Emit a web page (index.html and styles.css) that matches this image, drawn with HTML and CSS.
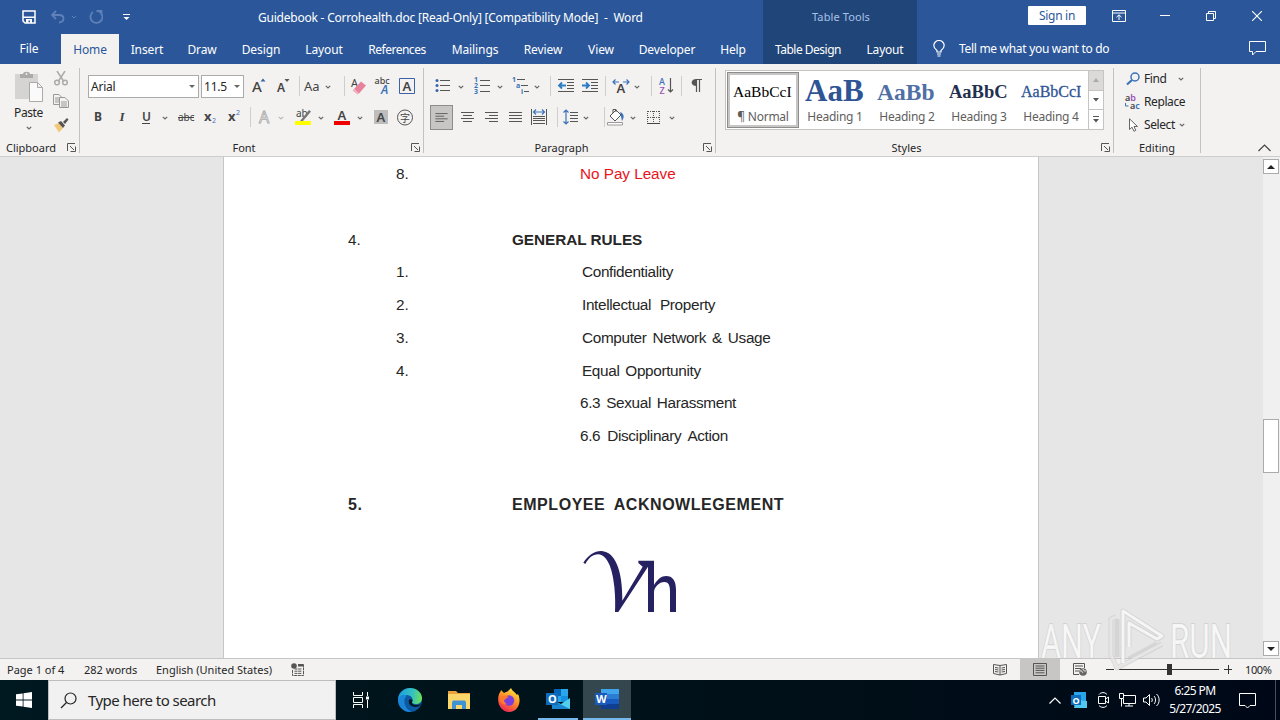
FILE: index.html
```
<!DOCTYPE html>
<html lang="en">
<head>
  <meta charset="UTF-8">
  <title>Guidebook - Corrohealth.doc - Word</title>
  <link rel="stylesheet" href="styles.css">
</head>
<body>
  <svg class="defs" width="0" height="0">
    <symbol id="chev" viewBox="0 0 6 4"><path d="M.8.8L3 3L5.2.8" fill="none" stroke="#666" stroke-width="1.2"/></symbol>
    <symbol id="launch" viewBox="0 0 9 9"><path d="M.5 8V.5H8M3 3L7 7M8.500 3.500V8.500H3.500" fill="none" stroke="#555"/></symbol>
  </svg>
  <div class="desktop">
    <header class="header">
      <div class="header__main">
        <div class="titlebar">
          <div class="quick">
            <svg width="14" height="14" viewBox="0 0 14 14"><path d="M1 1H13V13H3L1 11Z" fill="none" stroke="#fff" stroke-width="1.500"/><path d="M1 6.500H13V8H1ZM4 9H10V13H8V10.500H6.500V13H4Z" fill="#fff"/></svg>
            <svg width="28" height="14" viewBox="0 0 28 14"><path d="M6 1L2 5L6 9M2 5H9C15 5 15 12 9 12.500" fill="none" stroke="#5f80b8" stroke-width="1.800"/><path d="M22 6l2 2 2-2" fill="none" stroke="#5f80b8"/></svg>
            <svg width="14" height="14" viewBox="0 0 14 14"><path d="M10 1.500A6 6 0 1 1 4 2M7.500 1H12.500V5" fill="none" stroke="#5f80b8" stroke-width="1.800"/></svg>
            <svg width="7" height="7" viewBox="0 0 7 7"><path d="M0 .5H7" stroke="#fff"/><path d="M.5 3H6.500L3.500 6Z" fill="#fff"/></svg>
          </div>
          <div class="titlebar__name">Guidebook - Corrohealth.doc [Read-Only] [Compatibility Mode]&nbsp; -&nbsp; Word</div>
        </div>
        <nav class="tabs">
          <span class="tabs__file">File</span>
          <span class="tabs__active">Home</span>
          <span>Insert</span>
          <span>Draw</span>
          <span>Design</span>
          <span>Layout</span>
          <span>References</span>
          <span>Mailings</span>
          <span>Review</span>
          <span>View</span>
          <span>Developer</span>
          <span>Help</span>
        </nav>
      </div>
      <div class="context">
        <div class="context__title">Table Tools</div>
        <div class="context__tabs"><span>Table Design</span><span>Layout</span></div>
      </div>
      <div class="header__right">
        <div class="window">
          <button class="window__signin">Sign in</button>
          <svg width="14" height="12" viewBox="0 0 14 12"><path d="M.5.5H13.500V11.500H.5ZM.5 3H13.500M7 10V5M4.500 7.200L7 4.800L9.500 7.200" fill="none" stroke="#fff"/></svg>
          <svg width="10" height="10" viewBox="0 0 10 10"><path d="M0 4.500H10" stroke="#fff"/></svg>
          <svg width="10" height="10" viewBox="0 0 10 10"><path d="M.5 2.500H7.500V9.500H.5ZM2.500 2.500V.5H9.500V7.500H7.500" fill="none" stroke="#fff"/></svg>
          <svg width="10" height="10" viewBox="0 0 10 10"><path d="M0 0L10 10M10 0L0 10" stroke="#fff" stroke-width="1.100"/></svg>
        </div>
        <div class="tell">
          <svg width="12" height="17" viewBox="0 0 12 17"><path d="M4 12V10.500C2 9 .8 7.500.8 5.500A5.200 5 0 0 1 11.200 5.500C11.200 7.500 10 9 8 10.500V12ZM4 14H8M4.500 16H7.500" fill="none" stroke="#fff" stroke-width="1.200"/></svg>
          <span>Tell me what you want to do</span>
          <svg class="tell__comment" width="17" height="15" viewBox="0 0 17 15"><path d="M.5.5H16.500V10.500H7L3.500 14V10.500H.5Z" fill="none" stroke="#fff"/></svg>
        </div>
      </div>
    </header>

    <section class="ribbon">
      <div class="group group--clipboard">
        <div class="clipboard">
          <div class="clipboard__paste">
            <svg width="30" height="32" viewBox="0 0 30 32"><path d="M1 3H24V28H1Z" fill="#d6d3d3"/><path d="M6 7V3H9C9 0 16 0 16 3H19V7Z" fill="#aaa"/><circle cx="12.500" cy="3" r="1" fill="#eee"/><path d="M15.500 11.500H23.500L28.500 16.500V30.500H15.500ZM23.500 11.500V16.500H28.500" fill="#fafafa" stroke="#aaa"/></svg>
            <span>Paste</span>
            <svg width="6" height="4"><use href="#chev"/></svg>
          </div>
          <div class="clipboard__side">
            <svg width="16" height="16" viewBox="0 0 16 16" fill="none" stroke="#aaa" stroke-width="1.500"><path d="M4 0L10.500 10M12 0L5.500 10"/><circle cx="4" cy="11.500" r="2.300"/><circle cx="12" cy="11.500" r="2.300"/></svg>
            <svg width="16" height="16" viewBox="0 0 16 16" fill="#f3f2f1" stroke="#999"><path d="M.5.5H6L8.500 3V10.500H.5ZM2 4H7M2 6H7M2 8H7"/><path d="M6.500 3.500H12L15.500 7V13.500H6.500ZM8 8H14M8 10H14M8 12H14"/></svg>
            <svg width="16" height="16" viewBox="0 0 16 16"><path d="M1 8L6 6L10 11L6 15.500Z" fill="#f0c878"/><path d="M5 5.500L8 4L12 8.500L10 11ZM10 5L14 1L15.500 2.500L12 7Z" fill="#555"/></svg>
          </div>
        </div>
        <div class="group__label">Clipboard<svg class="group__launch" width="9" height="9"><use href="#launch"/></svg></div>
      </div>

      <div class="group group--font">
        <div class="row row--font1">
          <div class="combo combo--name">Arial<i></i></div>
          <div class="combo combo--size">11.5<i></i></div>
          <svg width="24" height="24" viewBox="0 0 24 24"><text x="4" y="18" class="t16">A</text><path d="M12.500 7.500L15 4.500L17.500 7.500Z" fill="#3b62a8"/></svg>
          <svg width="24" height="24" viewBox="0 0 24 24"><text x="5" y="18" class="t12">A</text><path d="M12.500 5L15 8L17.500 5Z" fill="#555"/></svg>
          <b class="sep"></b>
          <svg width="38" height="24" viewBox="0 0 38 24"><text x="2" y="17" class="t13 plain">Aa</text><use href="#chev" x="23" y="11" width="6" height="4"/></svg>
          <b class="sep"></b>
          <svg width="24" height="24" viewBox="0 0 24 24"><text x="4" y="13" class="t11">A</text><path d="M7 15L14 7.500L19 11.500L12 19.500Z" fill="#e8829c"/><path d="M7 15L12 19.500L10.500 20.500L5.500 16.500Z" fill="#efb0bf"/></svg>
          <svg width="24" height="24" viewBox="0 0 24 24"><text x="3.500" y="10" class="t9">abc</text><text x="10" y="20" class="t12 blue ital">A</text></svg>
          <svg width="24" height="24" viewBox="0 0 24 24"><path d="M4.500 4.500H19.500V19.500H4.500Z" fill="none" stroke="#3b62a8"/><text x="7.500" y="17" class="t13">A</text></svg>
        </div>
        <div class="row row--font2">
          <svg width="24" height="24" viewBox="0 0 24 24"><text x="8" y="16" class="t12 bold">B</text></svg>
          <svg width="24" height="24" viewBox="0 0 24 24"><text x="9.500" y="16" class="t13 serif">I</text></svg>
          <svg width="38" height="24" viewBox="0 0 38 24"><text x="8" y="15.500" class="t12">U</text><path d="M8 18.500H16" stroke="#444"/><use href="#chev" x="28" y="11" width="6" height="4"/></svg>
          <svg width="24" height="24" viewBox="0 0 24 24"><text x="4" y="16" class="t10">abc</text><path d="M4 12.500H20" stroke="#444"/></svg>
          <svg width="24" height="24" viewBox="0 0 24 24"><text x="6" y="16" class="t13 bold">x</text><text x="14" y="18" class="t7 blue">2</text></svg>
          <svg width="24" height="24" viewBox="0 0 24 24"><text x="6" y="16" class="t13 bold">x</text><text x="14" y="10" class="t7 blue">2</text></svg>
          <b class="sep"></b>
          <svg width="38" height="24" viewBox="0 0 38 24"><text x="6" y="18" class="outline">A</text><use href="#chev" x="25" y="11" width="6" height="4" opacity=".4"/></svg>
          <svg width="38" height="24" viewBox="0 0 38 24"><text x="4" y="12" class="t10">ab</text><path d="M8 16L17 5L19 6.500L11 16Z" fill="#777"/><path d="M3 16H19V20H3Z" fill="#ff0"/><use href="#chev" x="26" y="11" width="6" height="4"/></svg>
          <svg width="38" height="24" viewBox="0 0 38 24"><text x="6.500" y="15" class="t13">A</text><path d="M3 16H19V20H3Z" fill="#e00"/><use href="#chev" x="26" y="11" width="6" height="4"/></svg>
          <svg width="24" height="24" viewBox="0 0 24 24"><path d="M5 5H19V19H5Z" fill="#bdbdbd"/><text x="7.500" y="17" class="t13">A</text></svg>
          <svg width="24" height="24" viewBox="0 0 24 24"><circle cx="12" cy="12.500" r="7.500" fill="none" stroke="#555"/><text x="7" y="16.500" class="cjk">字</text></svg>
        </div>
        <div class="group__label">Font<svg class="group__launch" width="9" height="9"><use href="#launch"/></svg></div>
      </div>

      <div class="group group--para">
        <div class="row row--para1">
          <svg width="38" height="24" viewBox="0 0 38 24"><path d="M10 6.500H20M10 11.500H20M10 16.500H20" stroke="#555"/><g fill="#3b62a8"><circle cx="7" cy="6.500" r="1.500"/><circle cx="7" cy="11.500" r="1.500"/><circle cx="7" cy="16.500" r="1.500"/></g><use href="#chev" x="28" y="11" width="6" height="4"/></svg>
          <svg width="38" height="24" viewBox="0 0 38 24"><path d="M10 6.500H20M10 11.500H20M10 17.500H20" stroke="#555"/><text x="4" y="8" class="t6 blue">1</text><text x="4" y="14" class="t6 blue">2</text><text x="4" y="20" class="t6 blue">3</text><use href="#chev" x="27" y="11" width="6" height="4"/></svg>
          <svg width="38" height="24" viewBox="0 0 38 24"><path d="M8 5.500H16M12 11.500H19M15 17.500H20" stroke="#555"/><text x="3" y="8" class="t6 blue">1</text><text x="7" y="14" class="t6 blue">a</text><text x="12" y="20" class="t6 blue">i</text><use href="#chev" x="25" y="11" width="6" height="4"/></svg>
          <b class="sep"></b>
          <svg width="24" height="24" viewBox="0 0 24 24"><path d="M4 5.500H20M13 8.500H20M13 11.500H20M13 14.500H20M4 17.500H20" stroke="#555"/><path d="M12 11.500H5M8 8.500L5 11.500L8 14.500" fill="none" stroke="#2b7cc4" stroke-width="1.800"/></svg>
          <svg width="24" height="24" viewBox="0 0 24 24"><path d="M4 5.500H20M13 8.500H20M13 11.500H20M13 14.500H20M4 17.500H20" stroke="#555"/><path d="M4 11.500H11M8 8.500L11 11.500L8 14.500" fill="none" stroke="#2b7cc4" stroke-width="1.800"/></svg>
          <b class="sep"></b>
          <svg width="38" height="24" viewBox="0 0 38 24"><text x="7.500" y="18.500" class="t13">A</text><path d="M4 8H10M6.500 5.500L4 8L6.500 10.500M14 8H20M17.500 5.500L20 8L17.500 10.500" fill="none" stroke="#3b72b8" stroke-width="1.200"/><use href="#chev" x="25" y="11" width="6" height="4"/></svg>
          <b class="sep"></b>
          <svg width="24" height="24" viewBox="0 0 24 24"><text x="4" y="11" class="t9 blue">A</text><text x="4.500" y="20" class="t9 purple">Z</text><path d="M15.500 4V18M13 15.500L15.500 18L18 15.500" fill="none" stroke="#555" stroke-width="1.200"/></svg>
          <b class="sep"></b>
          <svg width="24" height="24" viewBox="0 0 24 24"><path d="M11 5.500H17M11.500 5V18M14.500 5V18" stroke="#555" stroke-width="1.200"/><path d="M11.500 5V12C5 12 5 5 11.500 5Z" fill="#555"/></svg>
        </div>
        <div class="row row--para2">
          <svg class="pressed" width="24" height="24" viewBox="0 0 24 24"><path d="M5 7.500H19M5 10.500H15M5 13.500H19M5 16.500H15" stroke="#555"/></svg>
          <svg width="24" height="24" viewBox="0 0 24 24"><path d="M5 7.500H18M7 10.500H16M5 13.500H18M7 16.500H16" stroke="#555"/></svg>
          <svg width="24" height="24" viewBox="0 0 24 24"><path d="M5 7.500H18M9 10.500H18M5 13.500H18M9 16.500H18" stroke="#555"/></svg>
          <svg width="24" height="24" viewBox="0 0 24 24"><path d="M5 7.500H18M5 10.500H18M5 13.500H18M5 16.500H18" stroke="#555"/></svg>
          <svg width="24" height="24" viewBox="0 0 24 24"><path d="M3.500 4V20M18.500 4V20M5 11.500H17M5 13.500H17M5 15.500H17M5 18.500H17" stroke="#555"/><path d="M5 7H17M8 4.500L5.500 7L8 9.500M14 4.500L16.500 7L14 9.500" fill="none" stroke="#3b72b8" stroke-width="1.200"/></svg>
          <b class="sep"></b>
          <svg width="38" height="24" viewBox="0 0 38 24"><path d="M9 7.500H17M9 10.500H17M9 13.500H17M9 16.500H17" stroke="#555"/><path d="M5 5V19M2.500 7.500L5 5L7.500 7.500M2.500 16.500L5 19L7.500 16.500" fill="none" stroke="#3b72b8" stroke-width="1.200"/><use href="#chev" x="22" y="11" width="6" height="4"/></svg>
          <b class="sep"></b>
          <svg width="38" height="24" viewBox="0 0 38 24"><path d="M3 11L9 5L14 10L8 16ZM6 8V4.500H9V7" fill="#fff" stroke="#555"/><path d="M13 7C18 9 17 13 15 16Z" fill="#3b72b8"/><path d="M.5 17.500H15.500V20H.5Z" fill="#fff" stroke="#999"/><use href="#chev" x="23" y="11" width="6" height="4"/></svg>
          <svg width="38" height="24" viewBox="0 0 38 24"><path d="M1.500 6V18M7.500 6V18M13.500 6V18M2 6.500H14M2 12.500H14" fill="none" stroke="#555" stroke-dasharray="1 1"/><path d="M1 18.500H14" stroke="#444"/><use href="#chev" x="23" y="11" width="6" height="4"/></svg>
        </div>
        <div class="group__label">Paragraph<svg class="group__launch" width="9" height="9"><use href="#launch"/></svg></div>
      </div>

      <div class="group group--styles">
        <div class="gallery">
          <div class="style style--on"><span class="style__demo demo--normal">AaBbCcI</span><span class="style__name">¶ Normal</span></div>
          <div class="style"><span class="style__demo demo--h1">AaB</span><span class="style__name">Heading 1</span></div>
          <div class="style"><span class="style__demo demo--h2">AaBb</span><span class="style__name">Heading 2</span></div>
          <div class="style"><span class="style__demo demo--h3">AaBbC</span><span class="style__name">Heading 3</span></div>
          <div class="style"><span class="style__demo demo--h4">AaBbCcI</span><span class="style__name">Heading 4</span></div>
          <div class="gallery__scroll">
            <span><svg width="6" height="4"><path d="M0 4L3 0L6 4Z" fill="#aaa"/></svg></span>
            <span><svg width="6" height="4"><path d="M0 0L3 3.500L6 0Z" fill="#555"/></svg></span>
            <span><svg width="6" height="7"><path d="M0 .5H6" stroke="#555"/><path d="M0 3L3 6.500L6 3Z" fill="#555"/></svg></span>
          </div>
        </div>
        <div class="group__label">Styles<svg class="group__launch" width="9" height="9"><use href="#launch"/></svg></div>
      </div>

      <div class="group group--editing">
        <div class="editing">
          <div><svg width="14" height="14" viewBox="0 0 14 14"><circle cx="9" cy="5" r="4" fill="none" stroke="#3b72b8" stroke-width="1.500"/><path d="M6 8L1 12.500" stroke="#3b72b8" stroke-width="2.200"/></svg><span>Find</span><svg class="editing__find" width="6" height="4"><use href="#chev"/></svg></div>
          <div><svg class="editing__replace" width="17" height="18" viewBox="0 0 17 18"><text x="1" y="8" class="t10">a<tspan class="purple">b</tspan></text><text x="6" y="16" class="t10">a<tspan class="blue">c</tspan></text><path d="M1.500 10V13H4.500" fill="none" stroke="#3b72b8"/></svg><span>Replace</span></div>
          <div><svg width="14" height="14" viewBox="0 0 14 14"><path d="M3.500.8V11.500L6 9.200L8 13.300L9.800 12.300L8 8.500H11.500Z" fill="#fff" stroke="#666"/></svg><span>Select</span><svg width="6" height="4"><use href="#chev"/></svg></div>
        </div>
        <div class="group__label">Editing</div>
      </div>
      <svg class="ribbon__collapse" width="13" height="8" viewBox="0 0 13 8"><path d="M.5 7L6.500 1L12.500 7" fill="none" stroke="#444" stroke-width="1.200"/></svg>
    </section>

    <main class="doc">
      <div class="page">
        <div class="line line--sub"><span>8.</span><span class="red">No Pay Leave</span></div>
        <div class="line"></div>
        <div class="line line--top"><span>4.</span><b>GENERAL RULES</b></div>
        <div class="line line--sub line--in"><span>1.</span><span class="tight">Confidentiality</span></div>
        <div class="line line--sub line--in"><span>2.</span><span class="tight tight--gap">Intellectual Property</span></div>
        <div class="line line--sub line--in"><span>3.</span><span class="tight">Computer Network &amp; Usage</span></div>
        <div class="line line--sub line--in"><span>4.</span><span class="tight">Equal Opportunity</span></div>
        <div class="line line--sub"><span></span><span class="tight">6.3 Sexual Harassment</span></div>
        <div class="line line--sub"><span></span><span class="tight tight--last">6.6 Disciplinary Action</span></div>
        <div class="line line--blank"></div>
        <div class="line line--top line--ack"><b>5.</b><b>EMPLOYEE ACKNOWLEGEMENT</b></div>
        <svg class="page__logo" width="140" height="100" viewBox="0 0 420 300"><path fill="#262262" d="M70 98C85 75 105 62 125 63C165 66 188 120 187 212L248 110L235 99V92H282V165C292 148 305 138 318 138C338 138 348 152 348 180V246H330V185C330 165 325 156 313 156C298 156 284 170 282 185V246H264V110L175 246H165C166 225 166 200 163 170C157 110 140 75 115 73C98 73 86 84 76 102Z"/></svg>
      </div>
      <div class="scroll">
        <span class="scroll__btn"><svg width="8" height="4"><path d="M0 4L4 0L8 4Z" fill="#222"/></svg></span>
        <span class="scroll__thumb"></span>
        <span class="scroll__btn"><svg width="8" height="4"><path d="M0 0L4 4L8 0Z" fill="#222"/></svg></span>
      </div>
    </main>

    <footer class="status">
      <span class="status__page">Page 1 of 4</span>
      <span class="status__words">282 words</span>
      <span class="status__lang">English (United States)</span>
      <svg width="13" height="13" viewBox="0 0 13 13"><circle cx="3" cy="3" r="2.800" fill="#555"/><path d="M7 1H12.500V3.500H7Z" fill="#555"/><path d="M1.500 7V12.500H12.500V1.500M3.500 6H11M3.500 8.200H11M3.500 10.400H11" fill="none" stroke="#555" stroke-dasharray="3 .6"/></svg>
      <div class="status__views">
        <span><svg width="14" height="13" viewBox="0 0 14 13"><path d="M.5 1.500L7 2.500L13.500 1.500V10.500L7 12L.5 10.500ZM7 2.500V12M2 4.500L5.500 5M2 6.500L5.500 7M2 8.500L5.500 9M8.500 5L12 4.500M8.500 7L12 6.500M8.500 9L12 8.500" fill="none" stroke="#555"/></svg></span>
        <span class="status__on"><svg width="14" height="13" viewBox="0 0 14 13"><path d="M.5.5H13.500V12.500H.5ZM2.500 3H11.500M2.500 5.200H11.500M2.500 7.400H11.500M2.500 9.800H11.500" fill="none" stroke="#555"/></svg></span>
        <span><svg width="14" height="13" viewBox="0 0 14 13"><path d="M6 11.500H.5V.5H11.500V5M2 3H10M2 5.500H8M2 8H6" fill="none" stroke="#555"/><circle cx="10" cy="9" r="3.800" fill="#666"/><path d="M7 8C9 7 9 9 10 10M10 6C10 8 12 8 13 8" fill="none" stroke="#eee"/></svg></span>
      </div>
      <div class="zoom"><i class="zoom__minus"></i><span class="zoom__track"><b></b></span><i class="zoom__plus"></i></div>
      <span class="status__pct">100%</span>
    </footer>

    <div class="taskbar">
      <div class="taskbar__start"><svg width="16" height="16" viewBox="0 0 16 16"><path d="M0 2.300L6.700 1.400V7.600H0ZM7.500 1.300L16 0V7.600H7.500ZM0 8.400H6.700V14.600L0 13.700ZM7.500 8.400H16V16L7.500 14.700Z" fill="#fff"/></svg></div>
      <div class="taskbar__search">
        <svg width="17" height="17" viewBox="0 0 17 17"><circle cx="10.500" cy="6.500" r="5.500" fill="none" stroke="#222" stroke-width="1.200"/><path d="M6.500 10.500L1 16" stroke="#222" stroke-width="1.300"/></svg>
        <span>Type here to search</span>
      </div>
      <div class="apps">
        <span><svg width="17" height="16" viewBox="0 0 17 16"><path d="M1.500 0V3.500H10.500V0M1.500 16V12.500H10.500V16M1.500 5.500H10.500V10.500H1.500ZM15.500 0V4M15.500 8V16" fill="none" stroke="#fff"/><path d="M14 4.500H17V7.500H14Z" fill="#fff"/></svg></span>
        <span><svg width="24" height="24" viewBox="0 0 24 24"><defs><linearGradient id="edge" x1="0" x2="1" y1=".3" y2=".4"><stop offset="0" stop-color="#1b9de2"/><stop offset=".6" stop-color="#35c1c1"/><stop offset="1" stop-color="#6be05a"/></linearGradient></defs><circle cx="12" cy="12" r="12" fill="#0c59a4"/><path d="M0 11C1 4 6 0 12 0C19 0 24 5 24 10C24 14 21 16 18 16C15 16 13 15 14.500 13C15 9 12 7 8 7C4 7 1 9 0 13Z" fill="url(#edge)"/><path d="M0 12C1 8 5 6 9 7.500C6 10 6 14 7 17C8 20 11 23 14 23.800C6 25 0 19 0 12Z" fill="#1b86d6"/><path d="M14.500 13C13 15 15 17 18 17C20 17 21.500 16.500 23 15.500C22 18 20 19 18 19C13 19 10 16 11 12C12 10.500 15 11 14.500 13Z" fill="#001820"/></svg></span>
        <span><svg width="22" height="20" viewBox="0 0 22 20"><path d="M0 1H8L10 3H22V19H0Z" fill="#e8a33c"/><path d="M0 4H22V19H0Z" fill="#fbd66b"/><path d="M4 19V13C4 11 5 10.500 6 10.500H16C17 10.500 18 11 18 13V19H14V15H8V19Z" fill="#3f93d2"/></svg></span>
        <span><svg width="24" height="24" viewBox="0 0 24 24"><defs><linearGradient id="fox" x1=".8" x2=".3" y1="0" y2="1"><stop offset="0" stop-color="#fff04a"/><stop offset=".45" stop-color="#ff9526"/><stop offset="1" stop-color="#ee2456"/></linearGradient></defs><path d="M2 6C3 4 4 3 4 2L7 5L9 4C11 4 12 2 14 0C15 3 18 4 20 7L21 6C25 14 21 24 12 24C4 24-1 15 2 6Z" fill="url(#fox)"/><circle cx="12" cy="12.500" r="5.200" fill="#7b3fe0"/><path d="M3 9C6 7 9 7 12 9C10 10 9 10 9 11C6 11 7 15 10 16C6 18 2 14 3 9Z" fill="#ff7a2c"/></svg></span>
        <span class="apps__open"><svg width="24" height="22" viewBox="0 0 24 22"><path d="M8 1H22V14H8Z" fill="#28a8ea"/><path d="M8 1H15V8H8Z" fill="#0364b8"/><path d="M15 8H22V14H15Z" fill="#1490df"/><path d="M6 12L15 16L24 10V21H6Z" fill="#50d0ee"/><path d="M6 12L24 21H6Z" fill="#1a86d0"/><path d="M0 5H12V17H0Z" fill="#0f6cbd"/><text x="2" y="15" class="applet">O</text></svg></span>
        <span class="apps__current"><svg width="24" height="22" viewBox="0 0 24 22"><path d="M6 1H24V6H6Z" fill="#41a5ee"/><path d="M6 6H24V11H6Z" fill="#2b7cd3"/><path d="M6 11H24V16H6Z" fill="#185abd"/><path d="M6 16H24V21H6Z" fill="#103f91"/><path d="M0 5H12V17H0Z" fill="#185abd"/><text x="1" y="15" class="applet">W</text></svg></span>
      </div>
      <div class="tray">
        <svg width="12" height="7" viewBox="0 0 12 7"><path d="M.5 6.500L6 1L11.500 6.500" fill="none" stroke="#fff" stroke-width="1.200"/></svg>
        <svg width="16" height="16" viewBox="0 0 16 16"><path d="M3 0H15V14H3Z" fill="#28a8ea"/><path d="M5 8L16 9V16H3Z" fill="#50c8f0"/><path d="M0 3H10V13H0Z" fill="#0f6cbd"/><text x="1.500" y="11.500" class="applet applet--small">O</text></svg>
        <svg width="12" height="16" viewBox="0 0 12 16"><path d="M1.500 4.500H8.500V11.500H1.500ZM8.500 7L11.500 5V11L8.500 9M2 2.500C4 0 8 0 10 2.500M2 13.500C4 16 8 16 10 13.500" fill="none" stroke="#fff"/></svg>
        <svg width="17" height="14" viewBox="0 0 17 14"><path d="M5 2.500H16.500V10.500H4.500V6M.5.5H4.500V5.500H.5ZM2.500 5.500V13.500M6 13H14M10 10.500V13" fill="none" stroke="#fff"/></svg>
        <svg class="tray__volume" width="17" height="14" viewBox="0 0 17 14"><path d="M.5 5H3L6.500 1.500V12.500L3 9H.5ZM8.500 5C9.500 6 9.500 8 8.500 9M11 3C13 5 13 9 11 11M13.500 1C17 4 17 10 13.500 13" fill="none" stroke="#fff"/></svg>
        <div class="clock"><span>6:25 PM</span><span>5/27/2025</span></div>
        <svg class="tray__note" width="17" height="17" viewBox="0 0 17 17"><path d="M.5 1.500H16.500V13.500H11L8.500 16L6 13.500H.5Z" fill="none" stroke="#fff"/></svg>
      </div>
    </div>

    <svg class="watermark" width="200" height="72" viewBox="0 0 200 72">
      <g class="watermark__text">
        <text x="4" y="53" textLength="60" lengthAdjust="spacingAndGlyphs">ANY</text>
        <text x="133" y="53" textLength="62" lengthAdjust="spacingAndGlyphs">RUN</text>
      </g>
      <g fill="none" stroke-linejoin="round">
        <path d="M79 12L74 14V50L80 63L125 39M80 14V52M86 58V6L125 31L120 34L92 18V42M92 54L120 39" stroke="#c4c4c4" stroke-opacity=".5" stroke-width="5"/>
        <path d="M79 12L74 14V50L80 63L125 39" stroke="#ececec" stroke-opacity=".7" stroke-width="3"/>
        <path d="M86 58V6L125 31L120 34L92 18V42" stroke="#f8f8f8" stroke-opacity=".9" stroke-width="3"/>
      </g>
    </svg>
  </div>
</body>
</html>
```
FILE: styles.css
```
html {
  box-sizing: border-box;
}

*, *:before, *:after {
  box-sizing: inherit;
}

body {
  margin: 0;
  font-family: 'Noto Sans', sans-serif;
  font-size: 12px;
  letter-spacing: -0.22px;
  color: #262626;
}

svg {
  display: block;
  flex: none;
}

.defs {
  position: absolute;
}

.desktop {
  position: relative;
  width: 1280px;
  height: 720px;
  overflow: hidden;
  display: flex;
  flex-direction: column;
  white-space: nowrap;
}

/* title bar and tabs */
.header {
  height: 64px;
  flex: none;
  display: grid;
  grid-template-columns: 763px 154px 363px;
  background: #2b579a;
  color: #fff;
}

.titlebar {
  height: 34px;
  display: flex;
  align-items: center;
}

.quick {
  width: 258px;
  padding-left: 22px;
  display: flex;
  align-items: center;
  gap: 13px;
}

.quick svg:nth-child(2) { margin-left: 1px; }
.quick svg:nth-child(3) { margin-left: -2px; }
.quick svg:nth-child(4) { margin-left: 7px; }

.tabs {
  height: 30px;
  display: grid;
  grid-template-columns: 61px 58px 56px 54px 64px 62px 84px 72px 64px 52px 80px 52px;
  line-height: 31px;
  text-align: center;
  letter-spacing: -0.1px;
}

.tabs span:nth-child(7) { letter-spacing: -0.5px; }

.tabs__file {
  padding-right: 3px;
  line-height: 29px;
}

.tabs__active {
  background: #f3f2f1;
  color: #2b579a;
}

.context {
  background: #204579;
  text-align: center;
}

.context__title {
  height: 34px;
  line-height: 33px;
  color: #a9c1e8;
  padding-left: 2px;
  font-size: 11px;
  letter-spacing: 0.1px;
}

.context__tabs {
  display: grid;
  grid-template-columns: 90px 64px;
  line-height: 31px;
  letter-spacing: -0.5px;
}

.context__tabs span:last-child { letter-spacing: -0.2px; }

.window {
  height: 34px;
  display: flex;
  align-items: center;
  padding-left: 111px;
  padding-bottom: 3px;
}

.window__signin {
  width: 58px;
  height: 19px;
  margin-right: 26px;
  padding: 0;
  border: 0;
  border-radius: 1px;
  background: #fff;
  color: #2b579a;
  font: inherit;
  letter-spacing: -0.3px;
}

.window svg:nth-of-type(2) { margin-left: 34px; }
.window svg:nth-of-type(3) { margin-left: 36px; }
.window svg:nth-of-type(4) { margin-left: 36px; }

.tell {
  height: 30px;
  display: flex;
  align-items: center;
  padding: 0 14px 2px 16px;
  gap: 14px;
  letter-spacing: -0.3px;
}

.tell__comment {
  margin-left: auto;
}

/* ribbon */
.ribbon {
  height: 93px;
  flex: none;
  display: flex;
  background: #f3f2f1;
  border-bottom: 1px solid #cfcdcc;
  padding-top: 4px;
}

.group {
  height: 85px;
  display: flex;
  flex-direction: column;
  border-right: 1px solid #c4c2c1;
}

.group--clipboard { width: 80px; }
.group--font { width: 344px; padding-left: 6px; }
.group--para { width: 292px; padding-left: 6px; }
.group--styles { width: 398px; padding-left: 9px; }
.group--editing { width: 87px; }

.group__label {
  margin-top: auto;
  margin-bottom: -3px;
  height: 17px;
  line-height: 17px;
  font-size: 11px;
  text-align: center;
  position: relative;
  letter-spacing: 0;
}

.group--clipboard .group__label { padding-right: 17px; }
.group--font .group__label { padding-right: 21px; }
.group--para .group__label { padding-right: 22px; }
.group--styles .group__label { padding-right: 25px; }

.group__launch {
  position: absolute;
  right: 3px;
  top: 4px;
}

.clipboard {
  display: flex;
  padding-top: 3px;
}

.clipboard__paste {
  width: 54px;
  padding-left: 3px;
  display: flex;
  flex-direction: column;
  align-items: center;
}

.clipboard__paste span { line-height: 20px; letter-spacing: -0.4px; }
.clipboard__paste svg:last-child { margin-top: 3px; }

.clipboard__side {
  display: flex;
  flex-direction: column;
  gap: 7px;
  margin-left: -1px;
}

.row {
  display: grid;
  height: 24px;
  align-items: center;
  margin-top: 6px;
}

.row--font1 { grid-template-columns: 115px 45px 24px 27px 3px 42px 3px 24px 24px 24px; padding-left: 2px; }
.row--font2 { grid-template-columns: 24px 24px 40px 24px 24px 28px 3px 39px 39px 38px 24px 24px; margin-top: 7px; }
.row--para1 { grid-template-columns: 40px 39px 41px 4px 24px 27px 4px 42px 4px 26px 4px 24px; }
.row--para2 { grid-template-columns: 25px 24px 24px 24px 29px 4px 43px 3px 39px 38px; margin-top: 7px; padding-left: 1px; }

.sep {
  width: 1px;
  height: 20px;
  background: #d0cecd;
}

.row--font1 .combo--name { width: 111px; }
.row--font1 .combo--size { width: 43px; margin-left: -2px; }

.combo {
  position: relative;
  height: 23px;
  border: 1px solid #ababab;
  background: #fff;
  padding-left: 2px;
  line-height: 21px;
}

.combo i {
  position: absolute;
  right: 3px;
  top: 9px;
  border: 3px solid transparent;
  border-top-color: #666;
}

.row--para2 .pressed {
  width: 21px;
  height: 23px;
  background: #c8c6c5;
  outline: 1px solid #8c8c8c;
}

svg text { fill: #444; letter-spacing: 0; }
svg .t16 { font-size: 15px; font-weight: 500; }
svg .t13 { font-size: 13px; font-weight: 600; }
svg .plain { font-weight: 400; }
svg .t12 { font-size: 12px; font-weight: 600; }
svg .t11 { font-size: 11px; }
svg .t10 { font-size: 10px; }
svg .t9 { font-size: 9px; font-weight: 500; }
svg .t7 { font-size: 7px; }
svg .t6 { font-size: 7px; font-weight: 700; }
svg .bold { font-weight: 700; }
svg .blue { fill: #3b72b8; }
svg .purple { fill: #9a4fb5; }
svg .ital { font-style: italic; }
svg .serif { font-family: 'Liberation Serif', serif; font-style: italic; font-weight: 700; }
svg .outline { font-size: 16px; fill: #fff; stroke: #aaa; stroke-width: 0.8px; }
svg .cjk { font-family: 'Noto Sans CJK SC', sans-serif; font-size: 10px; }
svg .applet { font-size: 11px; font-weight: 700; fill: #fff; }
svg .applet--small { font-size: 9px; }

.editing__replace text { font-size: 9px; font-weight: 600; }

.gallery {
  width: 379px;
  height: 60px;
  margin-top: 2px;
  display: flex;
  background: #fff;
  border: 1px solid #c6c4c3;
  padding-left: 1px;
}

.style {
  width: 72px;
  height: 56px;
  margin-top: 1px;
  display: flex;
  flex-direction: column;
  align-items: center;
  color: #605e5c;
}

.style--on {
  border: 1px solid #8c8c8c;
  box-shadow: inset 0 0 0 2px #c8c6c5;
}

.style--on .style__demo { height: 36px; }

.style__demo {
  height: 37px;
  width: 60px;
  overflow: hidden;
  display: flex;
  align-items: center;
  font-family: 'Liberation Serif', serif;
  letter-spacing: 0;
}

.style__name { letter-spacing: -0.25px; line-height: 16px; }
.demo--normal { color: #000; font-size: 15.5px; padding-top: 2px; }
.demo--h1 { color: #2f5496; font-size: 31px; font-weight: 700; }
.demo--h2 { color: #4f6fa5; font-size: 23.5px; font-weight: 700; padding-top: 4px; }
.demo--h3 { color: #1f3050; font-size: 18.5px; font-weight: 700; padding-top: 3px; }
.demo--h4 { color: #2f5496; font-size: 16px; padding-top: 3px; -webkit-text-stroke: 0.3px #2f5496; }

.gallery__scroll {
  width: 15px;
  margin-left: auto;
  display: flex;
  flex-direction: column;
  border-left: 1px solid #c6c4c3;
}

.gallery__scroll span {
  flex: 1;
  display: flex;
  align-items: center;
  justify-content: center;
  border-bottom: 1px solid #c6c4c3;
}

.gallery__scroll span:first-child { background: #dcdad9; }
.gallery__scroll span:last-child { border-bottom: 0; }

.editing div {
  display: flex;
  align-items: center;
  height: 23px;
  padding-left: 12px;
  gap: 4px;
}

.editing div span { letter-spacing: -0.4px; }
.editing { margin-top: -1px; }
.editing__find { margin-left: 7px; }
.editing__replace { margin-left: -2px; margin-right: -1px; }

.ribbon__collapse {
  margin: 76px 9px 0 auto;
}

/* document */
.doc {
  height: 501px;
  flex: none;
  display: flex;
  justify-content: space-between;
  background: #e6e6e6;
}

.page {
  width: 816px;
  margin-left: 223px;
  border: solid #c6c6c6;
  border-width: 0 1px;
  background: #fff;
  font-family: 'Liberation Sans', Arial, sans-serif;
  font-size: 15.33px;
  letter-spacing: -0.05px;
}

.line {
  height: 32.75px;
  line-height: 34px;
  display: grid;
}

.line--sub { grid-template-columns: 184px 1fr; padding-left: 172px; }
.line--in { grid-template-columns: 186px 1fr; }
.line--top { grid-template-columns: 164px 1fr; padding-left: 124px; }
.line--blank { height: 36px; }
.line--ack { font-size: 16px; letter-spacing: 0.55px; word-spacing: 4px; line-height: 34px; }
.tight { letter-spacing: -0.35px; word-spacing: 2px; }
.tight--gap { word-spacing: 5px; }
.tight--last { word-spacing: 3px; }
.red { color: #e8141c; }

.page__logo {
  margin: 9px 0 0 336px;
}

.scroll {
  width: 17px;
  padding: 2px 1px 2px 0;
  display: flex;
  flex-direction: column;
  background: #f0f0f0;
}

.scroll__btn {
  height: 15px;
  display: flex;
  align-items: center;
  justify-content: center;
  background: #fff;
  border: 1px solid #ababab;
}

.scroll__thumb {
  height: 54px;
  margin: 245px 0 168px;
  background: #fff;
  border: 1px solid #ababab;
}

/* status bar */
.status {
  height: 22px;
  flex: none;
  display: flex;
  align-items: center;
  background: #f3f2f1;
  border-top: 1px solid #c6c6c6;
  font-size: 11px;
  letter-spacing: 0;
}

.status__page { width: 84px; padding-left: 7px; }
.status__words { width: 72px; }
.status__lang { width: 135px; }

.status__views {
  display: flex;
  align-self: stretch;
  margin-left: 676px;
}

.status__views span {
  width: 40px;
  display: flex;
  align-items: center;
  justify-content: center;
}

.status__on { background: #c8c6c5; }

.zoom {
  display: flex;
  align-items: center;
  gap: 5px;
  margin-left: 6px;
}

.zoom__minus,
.zoom__plus {
  width: 8px;
  height: 1px;
  background: #333;
  position: relative;
}

.zoom__plus:after {
  content: '';
  position: absolute;
  left: 4px;
  top: -4px;
  width: 1px;
  height: 9px;
  background: #333;
}

.zoom__track {
  width: 100px;
  height: 1px;
  background: #333;
  position: relative;
}

.zoom__track b {
  position: absolute;
  left: 48px;
  top: -5px;
  width: 5px;
  height: 11px;
  background: #333;
}

.status__pct { margin-left: 13px; letter-spacing: -0.4px; }

/* taskbar */
.taskbar {
  height: 40px;
  flex: none;
  display: flex;
  background: linear-gradient(90deg, #001820, #001018 60%, #000818);
}

.taskbar__start {
  width: 48px;
  display: flex;
  align-items: center;
  justify-content: center;
}

.taskbar__search {
  width: 288px;
  display: flex;
  align-items: center;
  gap: 11px;
  padding-left: 11px;
  background: #f1f1f1;
  border: 1px solid #bdbdbd;
  font-size: 15px;
  letter-spacing: -0.55px;
}

.apps { display: flex; }

.apps span {
  width: 49.3px;
  display: flex;
  align-items: center;
  justify-content: center;
}

.apps .apps__open {
  border-bottom: 2px solid #76b9ed;
  width: 40px;
  margin: 0 5px 0 5px;
}

.apps .apps__current {
  width: 48px;
  background: #34474f;
  border-bottom: 2px solid #76b9ed;
}

.tray {
  margin-left: auto;
  margin-right: 4px;
  width: 227px;
  display: flex;
  align-items: center;
  gap: 10px;
  color: #fff;
  border-right: 1px solid #4a5058;
}

.tray__volume { margin-left: -3px; }

.clock {
  width: 54px;
  margin-left: -2px;
  display: flex;
  flex-direction: column;
  align-items: center;
  line-height: 18px;
  letter-spacing: -0.6px;
}

.tray__note { margin-left: 7px; }

.watermark {
  position: absolute;
  left: 1037px;
  top: 605px;
}

.watermark text {
  font-family: Roboto, sans-serif;
  font-size: 49px;
  fill: #fff;
  fill-opacity: 0.75;
  stroke: #c0c0c0;
  stroke-opacity: 0.5;
  stroke-width: 2px;
  paint-order: stroke;
}
```
